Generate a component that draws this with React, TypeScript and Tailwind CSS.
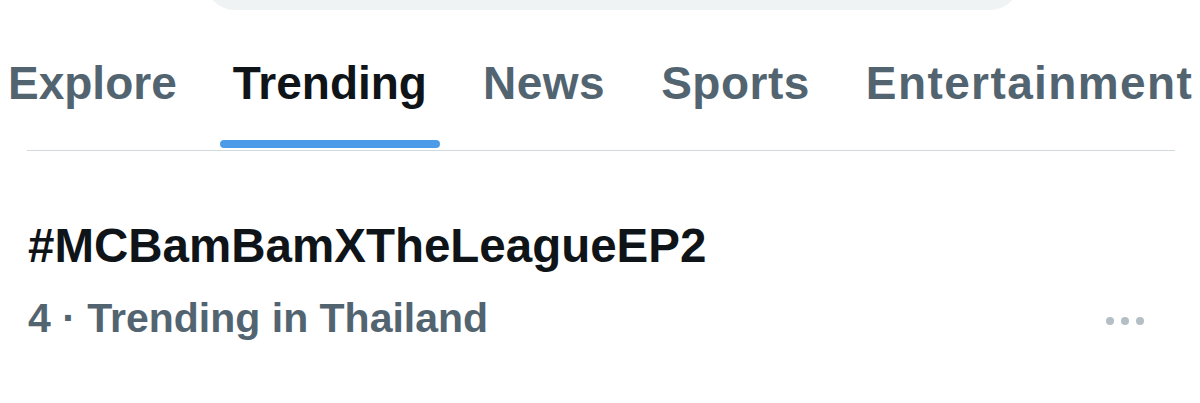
import React from 'react';

const tabs = [
  { label: 'Explore', track: '' },
  { label: 'Trending', track: '' },
  { label: 'News', track: 'tracking-[0.5px]' },
  { label: 'Sports', track: 'tracking-[0.5px]' },
  { label: 'Entertainment', track: 'tracking-[1.4px]' },
];

const App = () => {
  const active = 'Trending';

  return (
    <div className="w-[1200px] h-[403px] bg-white overflow-hidden font-['Liberation_Sans',Arial,sans-serif]">
      {/* search pill peeking in at the top */}
      <div className="h-[10px] overflow-hidden pl-[205px]">
        <div className="w-[815px] h-[60px] -mt-[50px] rounded-full bg-[#eff3f4]" />
      </div>

      <div className="flex gap-[56px] pl-[8px] pt-[50px]">
        {tabs.map((tab) => (
          <div key={tab.label} className="flex flex-col">
            <span
              className={`text-[46px] leading-none font-bold whitespace-nowrap ${tab.track} ${
                tab.label === active ? 'text-[#0f1419]' : 'text-[#536471]'
              }`}
            >
              {tab.label}
            </span>
            <div
              className={`mt-[34px] h-[8px] -mx-[13px] rounded-full ${
                tab.label === active ? 'bg-[#4c9be8]' : 'bg-transparent'
              }`}
            />
          </div>
        ))}
      </div>
      <div className="ml-[27px] w-[1148px] h-px mt-[2px] bg-[#cfd9de]" />

      <div className="pl-[28px] pr-[56px]">
        <div className="mt-[71px] text-[47.5px] leading-none font-bold text-[#0f1419]">
          #MCBamBamXTheLeagueEP2
        </div>
        <div className="mt-[28px] flex items-center justify-between">
          <span className="text-[41px] leading-none font-bold text-[#536471]">
            4 · Trending in Thailand
          </span>
          <div className="flex gap-[7px] mt-[5px]">
            <div className="w-[8px] h-[8px] rounded-full bg-[#b4bec5]" />
            <div className="w-[8px] h-[8px] rounded-full bg-[#b4bec5]" />
            <div className="w-[8px] h-[8px] rounded-full bg-[#b4bec5]" />
          </div>
        </div>
      </div>
    </div>
  );
};

export default App;
